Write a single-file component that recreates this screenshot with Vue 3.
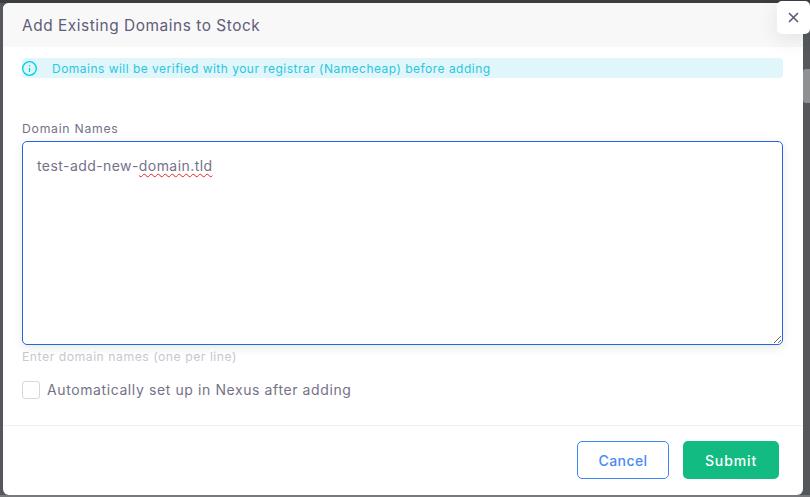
<template>
  <div class="overlay">
    <div class="scroll-thumb"></div>
    <div class="modal">
      <div class="modal-header">
        <h5>Add Existing Domains to Stock</h5>
      </div>
      <button class="close-btn" aria-label="Close">
        <svg width="11" height="11" viewBox="0 0 11 11">
          <path d="M1 1l9 9M10 1l-9 9" fill="none" stroke="#5e5873" stroke-width="1.6" />
        </svg>
      </button>
      <div class="modal-body">
        <div class="alert">
          <svg class="alert-icon" width="15" height="15" viewBox="1 1 22 22" fill="none" stroke="#00cfe8" stroke-width="2" stroke-linecap="round">
            <circle cx="12" cy="12" r="10" />
            <path d="M12 16v-4M12 8h.01" />
          </svg>
          <span>Domains will be verified with your registrar (Namecheap) before adding</span>
        </div>
        <label class="field-label">Domain Names</label>
        <div class="textarea-wrap">
          <textarea v-model="domains" spellcheck="false"></textarea>
          <div class="squiggle" aria-hidden="true">test-add-new-<span>domain.tld</span></div>
        </div>
        <small class="help">Enter domain names (one per line)</small>
        <label class="check-row">
          <input type="checkbox" v-model="autoSetup" />
          <span>Automatically set up in Nexus after adding</span>
        </label>
      </div>
      <div class="modal-footer">
        <button class="btn btn-cancel">Cancel</button>
        <button class="btn btn-submit">Submit</button>
      </div>
    </div>
  </div>
</template>

<script setup>
import { ref } from 'vue'

const domains = ref('test-add-new-domain.tld')
const autoSetup = ref(false)
</script>

<style>
html, body {
  margin: 0;
  overflow: hidden;
}
</style>

<style scoped>
.overlay {
  position: relative;
  box-sizing: border-box;
  width: 810px;
  height: 497px;
  padding: 3px 7px 2px 3px;
  background: linear-gradient(#3b3e41 0, #3b3e41 3px, #54585c 3px, #54585c 495px, #77797c 495px);
  font-family: Inter, "Open Sans", sans-serif;
  overflow: hidden;
}

.scroll-thumb {
  position: absolute;
  top: 69px;
  right: 0;
  width: 7px;
  height: 34px;
  background: #8e9194;
  border-radius: 3px 0 0 3px;
}

.modal {
  position: relative;
  height: 100%;
  display: flex;
  flex-direction: column;
  background: #fff;
  border-radius: 6px;
}

.modal-header {
  height: 44px;
  flex: none;
  display: flex;
  align-items: center;
  padding: 0 19px;
  background: #f8f8f8;
  border-radius: 6px 6px 0 0;
}

.modal-header h5 {
  margin: 0;
  font-size: 15.4px;
  font-weight: 400;
  letter-spacing: 0.55px;
  color: #625c78;
}

.close-btn {
  position: absolute;
  top: -2px;
  right: -7px;
  width: 33px;
  height: 33px;
  padding: 0;
  display: flex;
  align-items: center;
  justify-content: center;
  background: #fff;
  border: none;
  border-radius: 5px;
  box-shadow: 0 5px 20px rgba(34, 41, 47, 0.1);
}

.modal-body {
  flex: 1;
  padding: 11px 20px 0 19px;
}

.alert {
  height: 20px;
  display: flex;
  align-items: center;
  gap: 15px;
  background: #e0f6fb;
  border-radius: 4px;
  color: #2cc6de;
  font-size: 12px;
  letter-spacing: 0.48px;
}

.field-label {
  display: block;
  margin-top: 44px;
  font-size: 12.25px;
  letter-spacing: 0.72px;
  line-height: 14px;
  color: #757287;
}

.textarea-wrap {
  position: relative;
  height: 204px;
  margin-top: 5px;
}

textarea {
  display: block;
  box-sizing: border-box;
  width: 100%;
  height: 100%;
  padding: 14px;
  font-family: inherit;
  font-size: 14px;
  letter-spacing: 0.43px;
  line-height: 20px;
  color: #757287;
  background: #fff;
  border: 1px solid #2563eb;
  border-radius: 5px;
  outline: none;
  box-shadow: 0 3px 10px rgba(34, 41, 47, 0.1);
}

.squiggle {
  position: absolute;
  top: 15px;
  left: 15px;
  font-size: 14px;
  letter-spacing: 0.43px;
  line-height: 20px;
  color: transparent;
  white-space: pre;
  pointer-events: none;
}

.squiggle span {
  text-decoration: underline wavy #e8222a 1px;
  text-underline-offset: 2px;
}

.help {
  display: block;
  margin-top: 5px;
  font-size: 12.25px;
  letter-spacing: 0.5px;
  line-height: 14px;
  color: #c9c7d0;
}

.check-row {
  display: flex;
  align-items: center;
  height: 18px;
  gap: 7px;
  margin-top: 17px;
  font-size: 14px;
  letter-spacing: 0.6px;
  color: #757287;
}

.check-row span {
  margin-bottom: 2px;
}

.check-row input {
  appearance: none;
  flex: none;
  width: 18px;
  height: 18px;
  margin: 0;
  background: #fff;
  border: 1px solid #d8d6de;
  border-radius: 3px;
}

.modal-footer {
  height: 70px;
  flex: none;
  box-sizing: border-box;
  display: flex;
  justify-content: flex-end;
  align-items: flex-start;
  gap: 14px;
  padding: 15px 24px 0 0;
  border-top: 1px solid #f0f0f2;
}

.btn {
  height: 38px;
  font-family: inherit;
  font-size: 14px;
  font-weight: 500;
  border-radius: 5px;
}

.btn-cancel {
  width: 92px;
  letter-spacing: 0.4px;
  color: #4a8af5;
  background: #fff;
  border: 1px solid #3f86f5;
}

.btn-submit {
  width: 96px;
  letter-spacing: 0.9px;
  color: #fff;
  background: #12bb81;
  border: none;
}
</style>
